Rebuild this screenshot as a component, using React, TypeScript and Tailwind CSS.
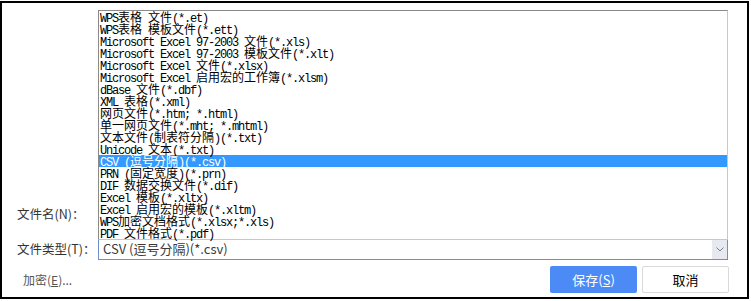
import React from 'react'

const types = [
  'WPS表格 文件(*.et)',
  'WPS表格 模板文件(*.ett)',
  'Microsoft Excel 97-2003 文件(*.xls)',
  'Microsoft Excel 97-2003 模板文件(*.xlt)',
  'Microsoft Excel 文件(*.xlsx)',
  'Microsoft Excel 启用宏的工作簿(*.xlsm)',
  'dBase 文件(*.dbf)',
  'XML 表格(*.xml)',
  '网页文件(*.htm; *.html)',
  '单一网页文件(*.mht; *.mhtml)',
  '文本文件(制表符分隔)(*.txt)',
  'Unicode 文本(*.txt)',
  'CSV (逗号分隔)(*.csv)',
  'PRN (固定宽度)(*.prn)',
  'DIF 数据交换文件(*.dif)',
  'Excel 模板(*.xltx)',
  'Excel 启用宏的模板(*.xltm)',
  'WPS加密文档格式(*.xlsx;*.xls)',
  'PDF 文件格式(*.pdf)',
]

const selected = 'CSV (逗号分隔)(*.csv)'

// list font: half width latin, full width hanzi
function ListText({ text }: { text: string }) {
  const runs = text.match(/[\u3000-\u9fff\uff00-\uffef]+|[^\u3000-\u9fff\uff00-\uffef]+/g) || []
  return (
    <>
      {runs.map((r, i) =>
        /[\u3000-\u9fff\uff00-\uffef]/.test(r) ? (
          <span key={i} className="font-['Noto_Sans_CJK_SC',sans-serif] text-[12px] leading-[12px]">
            {r}
          </span>
        ) : (
          <span
            key={i}
            className="font-['Liberation_Mono',monospace] text-[12px] leading-[12px] tracking-[-1.2px] whitespace-pre"
          >
            {r}
          </span>
        ),
      )}
    </>
  )
}

export default function App() {
  const ui = "font-['Noto_Sans_CJK_SC',sans-serif]"

  return (
    <div className="w-[751px] h-[301px] bg-white">
      <div className="relative mt-px w-[749px] h-[298px] border-2 border-black bg-white flex flex-col pb-[4px]">
        <div className="flex-1" />

        <div className="grid grid-cols-[81px_630px] pl-[15px] h-[21px] items-center">
          <span className={`${ui} text-[12.5px] text-[#333] whitespace-nowrap`}>文件名(N)：</span>
          <div className="h-[21px] border border-[#c8ccd4]" />
        </div>

        <div className="grid grid-cols-[81px_630px] pl-[15px] h-[21px] items-center mt-[14px]">
          <span className={`${ui} text-[12.5px] text-[#333] whitespace-nowrap`}>文件类型(T)：</span>
          <div className="h-[21px] flex border border-[#6f8fcc] border-t-[#c8ccd4]">
            <span className={`${ui} flex-1 pl-[4px] text-[13px] leading-[18px] text-[#3a3a3a]`}>{selected}</span>
            <span className="w-[15px] bg-[#e6e9ef] flex items-center justify-center">
              <svg width="8" height="5" viewBox="0 0 8 5">
                <path d="M0.5 0.5 L4 4 L7.5 0.5" fill="none" stroke="#7a8290" strokeWidth="1" />
              </svg>
            </span>
          </div>
        </div>

        <div className="flex items-center h-[27px] mt-[6px] pl-[21px] pr-[18px]">
          <span className={`${ui} text-[12px] text-[#555]`}>
            加密(<span className="underline">E</span>)...
          </span>
          <div className="flex-1" />
          <button className={`${ui} w-[87px] h-[27px] rounded-[2px] bg-[#4c8bf5] text-white text-[13px]`}>
            保存(<span className="underline">S</span>)
          </button>
          <button
            className={`${ui} ml-[5px] w-[87px] h-[27px] rounded-[2px] border border-[#d9d9d9] bg-white text-black text-[13px]`}
          >
            取消
          </button>
        </div>

        <ul className="absolute left-[96px] top-[7px] w-[630px] h-[230px] bg-white border border-t-[#8a8a8a] border-l-[#8a8a8a] border-r-[#c6c6ce] border-b-[#c6c6ce]">
          {types.map((t) => (
            <li
              key={t}
              className={
                t === selected
                  ? 'flex items-baseline h-[12px] pl-px bg-[#3399ff] text-white'
                  : 'flex items-baseline h-[12px] pl-px text-black'
              }
            >
              <ListText text={t} />
            </li>
          ))}
        </ul>
      </div>
    </div>
  )
}
